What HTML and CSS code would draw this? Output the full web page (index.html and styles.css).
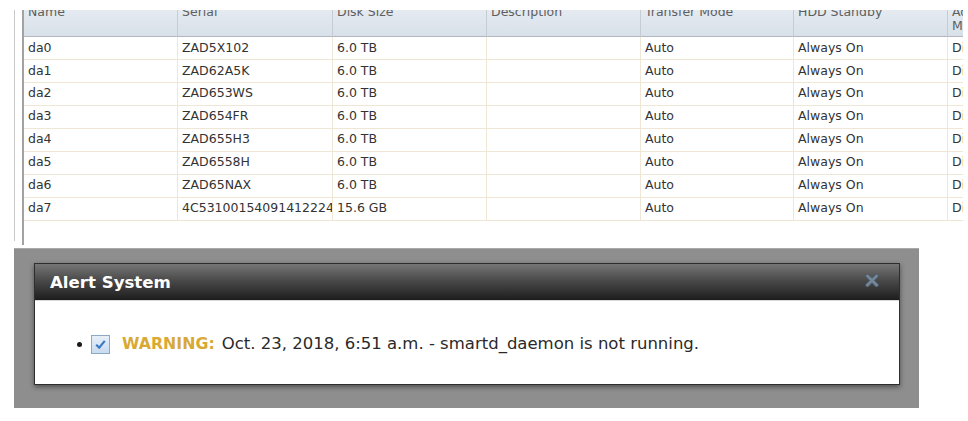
FILE: index.html
```html
<!DOCTYPE html>
<html lang="en">
<head>
<meta charset="utf-8">
<title>Disks</title>
<link rel="stylesheet" href="styles.css">
</head>
<body>
<div class="page">
  <section class="panel">
    <div class="grid-wrap">
      <table class="disks">
        <thead>
          <tr>
            <th class="c-name">Name</th>
            <th class="c-serial">Serial</th>
            <th class="c-size">Disk Size</th>
            <th class="c-desc">Description</th>
            <th class="c-mode">Transfer Mode</th>
            <th class="c-standby">HDD Standby</th>
            <th class="c-apm">Advanced Power Management</th>
            <th class="c-acoustic">Acoustic Level</th>
          </tr>
        </thead>
        <tbody>
          <tr><td>da0</td><td>ZAD5X102</td><td>6.0 TB</td><td></td><td>Auto</td><td>Always On</td><td>Disabled</td><td>Disabled</td></tr>
          <tr><td>da1</td><td>ZAD62A5K</td><td>6.0 TB</td><td></td><td>Auto</td><td>Always On</td><td>Disabled</td><td>Disabled</td></tr>
          <tr><td>da2</td><td>ZAD653WS</td><td>6.0 TB</td><td></td><td>Auto</td><td>Always On</td><td>Disabled</td><td>Disabled</td></tr>
          <tr><td>da3</td><td>ZAD654FR</td><td>6.0 TB</td><td></td><td>Auto</td><td>Always On</td><td>Disabled</td><td>Disabled</td></tr>
          <tr><td>da4</td><td>ZAD655H3</td><td>6.0 TB</td><td></td><td>Auto</td><td>Always On</td><td>Disabled</td><td>Disabled</td></tr>
          <tr><td>da5</td><td>ZAD6558H</td><td>6.0 TB</td><td></td><td>Auto</td><td>Always On</td><td>Disabled</td><td>Disabled</td></tr>
          <tr><td>da6</td><td>ZAD65NAX</td><td>6.0 TB</td><td></td><td>Auto</td><td>Always On</td><td>Disabled</td><td>Disabled</td></tr>
          <tr><td>da7</td><td>4C531001540914122249</td><td>15.6 GB</td><td></td><td>Auto</td><td>Always On</td><td>Disabled</td><td>Disabled</td></tr>
        </tbody>
      </table>
    </div>
  </section>

  <div class="overlay">
    <div class="dialog">
      <div class="dialog-title">
        <span class="dialog-heading">Alert System</span>
        <span class="close" aria-label="close">
          <svg width="14" height="13" viewBox="0 0 14 13">
            <path d="M2.5 2 L11.5 11 M11.5 2 L2.5 11" stroke="#4a5866" stroke-width="4.4" stroke-linecap="square"/>
            <path d="M2.5 2 L11.5 11 M11.5 2 L2.5 11" stroke="#74879b" stroke-width="2.6" stroke-linecap="square"/>
          </svg>
        </span>
      </div>
      <div class="dialog-body">
        <ul class="alerts">
          <li class="alert">
            <span class="bullet"></span>
            <span class="check">
              <svg width="13" height="13" viewBox="0 0 13 13">
                <path d="M2.2 6.8 L5.2 9.6 L10.8 2.8" fill="none" stroke="#3a78c2" stroke-width="2.1"/>
              </svg>
            </span>
            <span class="warn">WARNING:</span>
            <span class="msg">Oct. 23, 2018, 6:51 a.m. - smartd_daemon is not running.</span>
          </li>
        </ul>
      </div>
    </div>
  </div>
</div>
</body>
</html>
```

FILE: styles.css
```css
html, body {
  margin: 0;
  padding: 0;
  background: #ffffff;
  overflow: hidden;
}

.page {
  width: 968px;
  height: 421px;
  padding-top: 10px;
  box-sizing: border-box;
  font-family: "DejaVu Sans", Verdana, sans-serif;
  color: #333333;
}

/* ---------- disk grid ---------- */
.panel {
  margin: 0 0 0 14px;
  height: 231px;
  border-left: 1px solid #c9c9c9;
  padding-left: 7px;
}

.grid-wrap {
  width: 939px;
  height: 235px;
  overflow: hidden;
  border-left: 2px solid #a3a3a3;
}

.disks {
  margin-top: -20px;
  border-collapse: separate;
  border-spacing: 0;
  table-layout: fixed;
  width: 1232px;
  font-size: 12.5px;
}

.disks th,
.disks td {
  box-sizing: border-box;
  text-align: left;
  white-space: nowrap;
  overflow: hidden;
  padding-left: 4px;
  padding-right: 0;
}

.disks th {
  vertical-align: top;
  font-weight: normal;
  color: #5e5e5e;
  line-height: 14px;
  padding-top: 15px;
  padding-bottom: 3px;
  background: linear-gradient(#eef2f6, #d8e0e9);
  border-right: 1px solid #c5ccd4;
  border-bottom: 1px solid #b4b8bd;
}

.disks th.c-apm {
  white-space: normal;
}

.c-name { width: 154px; }
.c-serial { width: 155px; }
.c-size { width: 154px; }
.c-desc { width: 154px; }
.c-mode { width: 153px; }
.c-standby { width: 154px; }
.c-apm { width: 154px; }
.c-acoustic { width: 154px; }

.disks td {
  color: #333333;
  line-height: 14.75px;
  padding-top: 3.6px;
  padding-bottom: 3.6px;
  border-right: 1px solid #efe6d6;
  border-bottom: 1px solid #efe6d6;
}

/* ---------- alert dialog ---------- */
.overlay {
  margin: 7px 0 0 14px;
  width: 905px;
  height: 160px;
  box-sizing: border-box;
  padding: 14px 19px 24px 20px;
  background: #8e8e8e;
  border-top: 1px solid #a8a8a8;
}

.dialog {
  border: 1px solid #2e2e2e;
  background: #ffffff;
  box-shadow: 0 2px 5px rgba(0, 0, 0, 0.45);
}

.dialog-title {
  height: 36px;
  display: flex;
  align-items: center;
  justify-content: space-between;
  padding: 0 20px 0 15px;
  background: linear-gradient(#767676, #4a4a4a 45%, #1d1d1d);
}

.dialog-heading {
  color: #ffffff;
  font-weight: bold;
  font-size: 16.6px;
  padding-top: 1px;
}

.close {
  display: flex;
  width: 14px;
  height: 13px;
  margin-top: -4px;
}

.dialog-body {
  border-top: 1px solid #d8d8d8;
  height: 84px;
  box-sizing: border-box;
  padding-top: 33px;
}

.alerts {
  list-style: none;
  margin: 0;
  padding: 0 0 0 42px;
}

.alert {
  display: flex;
  align-items: center;
  font-size: 16.5px;
  color: #2a2a2a;
  line-height: 20px;
}

.bullet {
  width: 5px;
  height: 5px;
  border-radius: 50%;
  background: #1a1a1a;
  margin-right: 9px;
}

.check {
  width: 19px;
  height: 19px;
  box-sizing: border-box;
  border: 1px solid #8fa8c4;
  background: linear-gradient(#e6eff9, #c9dbef);
  display: flex;
  align-items: center;
  justify-content: center;
  margin-right: 12px;
}

.warn {
  color: #d8a935;
  font-weight: bold;
  font-size: 15.8px;
  margin-right: 7px;
}
```
